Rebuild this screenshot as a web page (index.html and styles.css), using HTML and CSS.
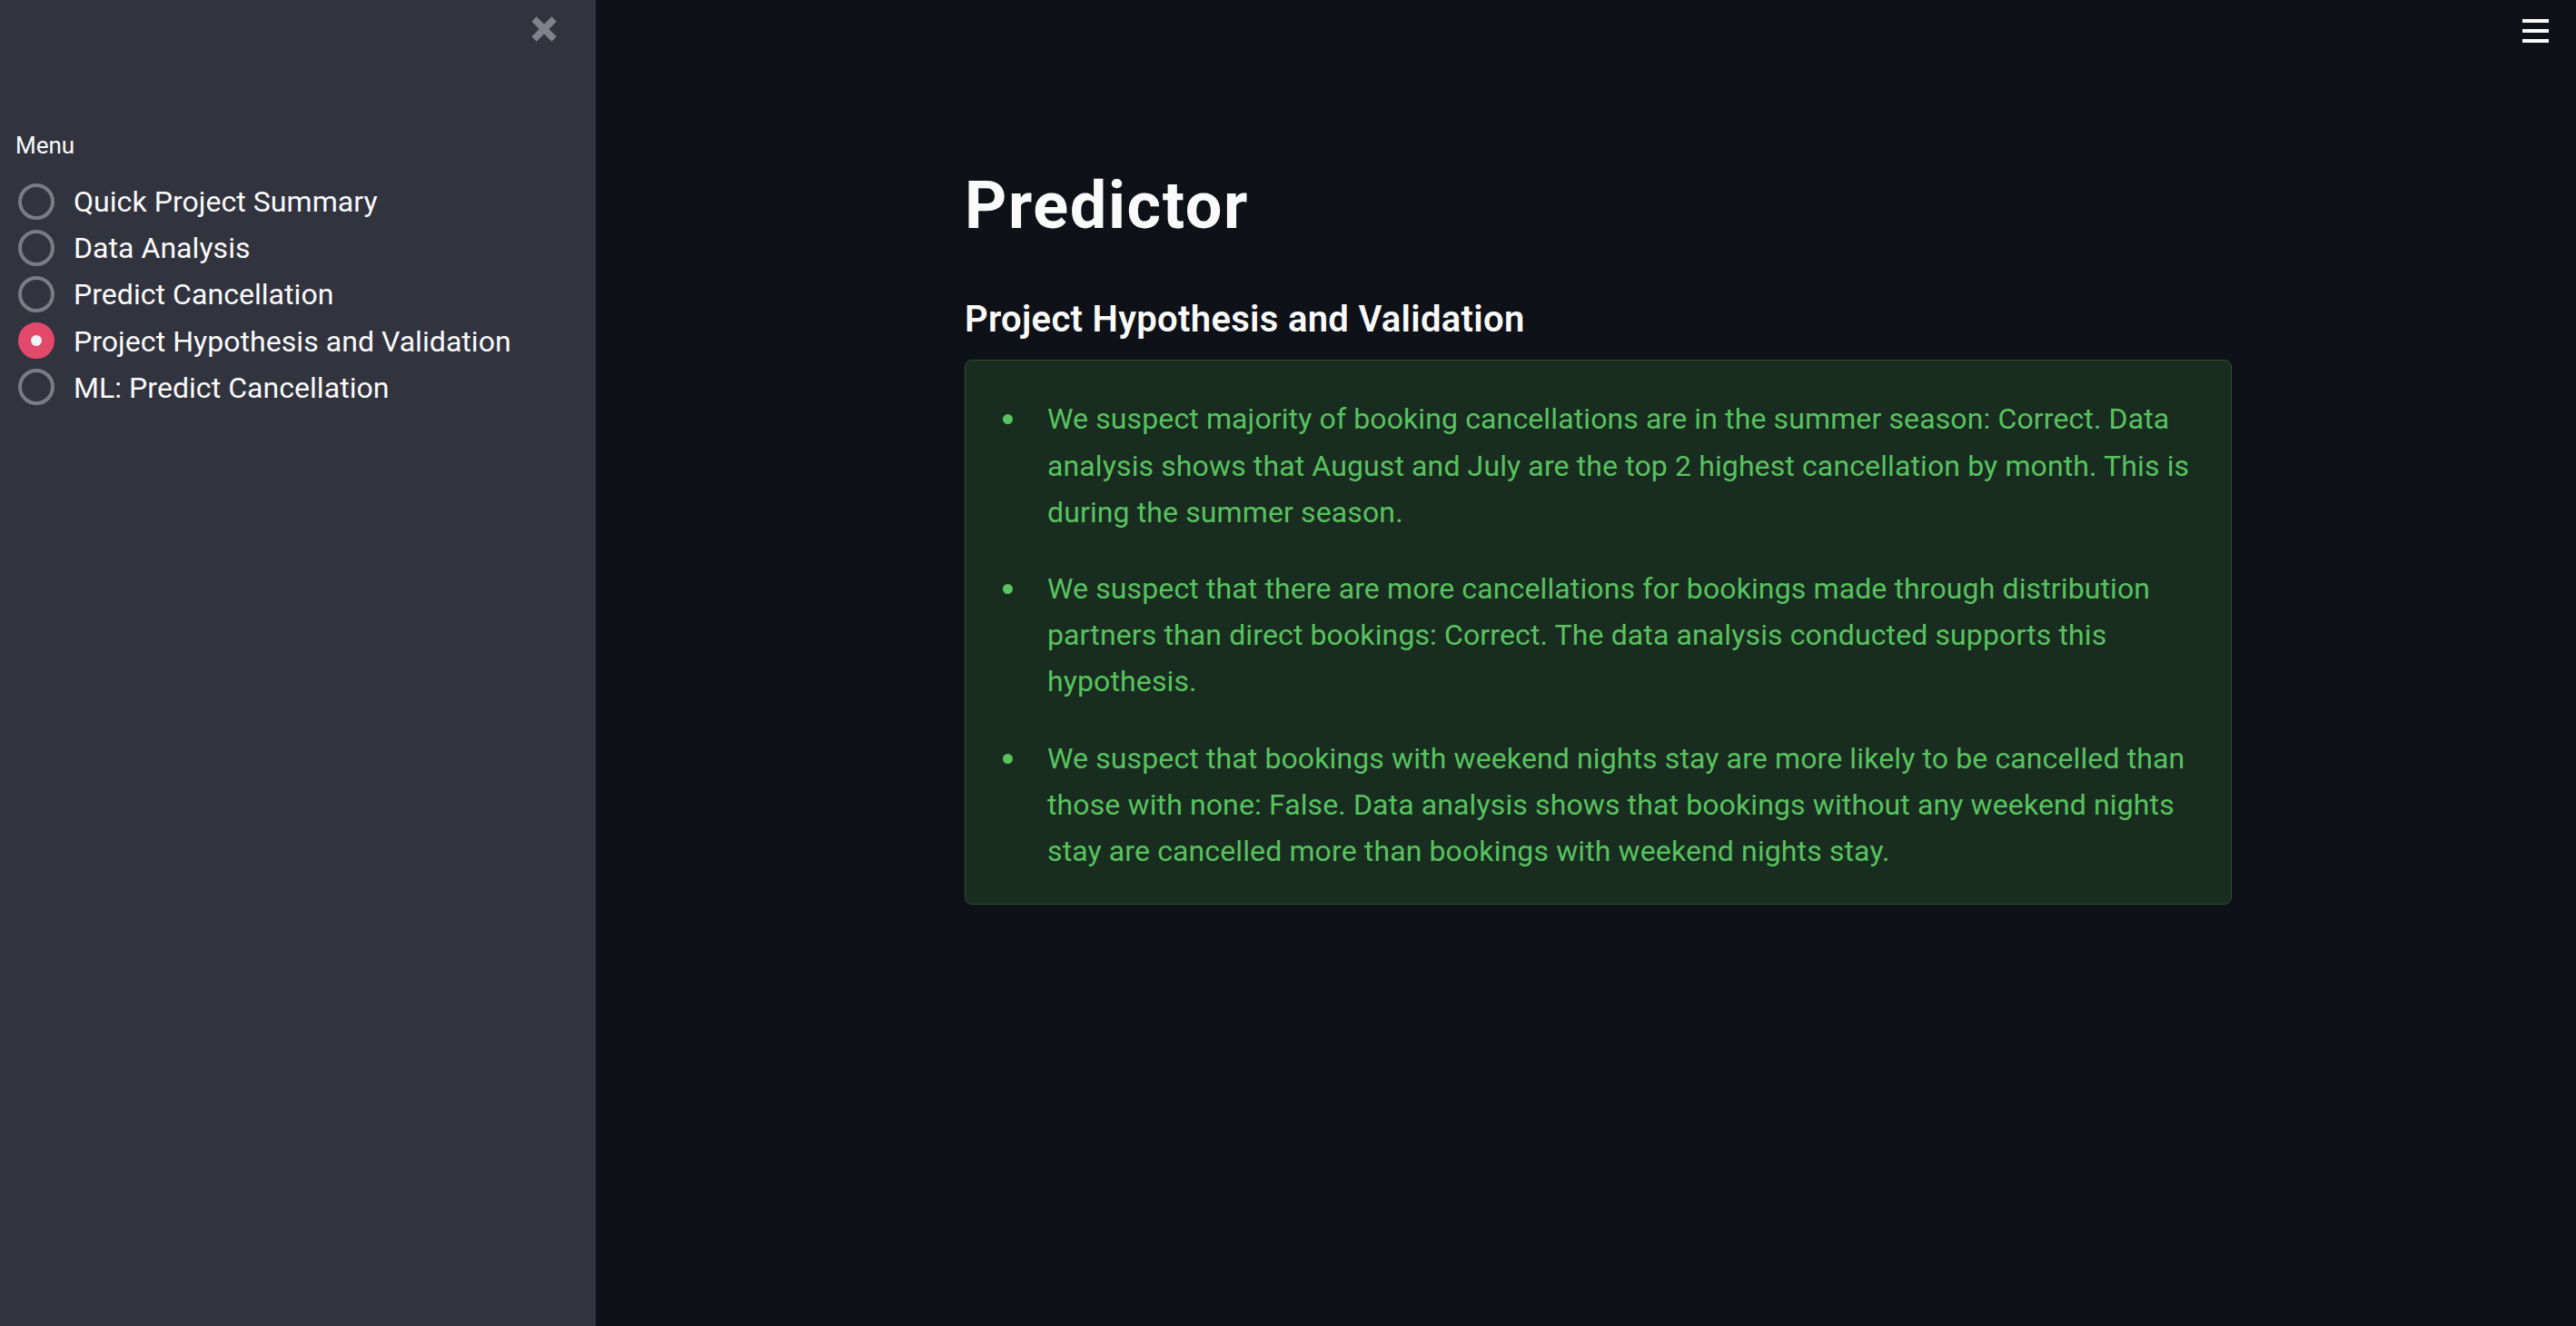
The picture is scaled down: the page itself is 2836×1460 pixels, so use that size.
FILE: index.html
```html
<!DOCTYPE html>
<html lang="en">
<head>
<meta charset="utf-8">
<title>Predictor</title>
<link rel="stylesheet" href="styles.css">
</head>
<body>
<div class="app">
  <aside class="sidebar">
    <div class="sidebar-head">
      <button class="close-btn" aria-label="Close sidebar">
        <svg width="28" height="28" viewBox="0 0 28 28"><path d="M3 3L25 25M25 3L3 25" stroke="#808289" stroke-width="7.5" fill="none"/></svg>
      </button>
    </div>
    <div class="menu-label">Menu</div>
    <div class="radio-group">
      <div class="radio"><span class="dot"></span><span class="radio-text">Quick Project Summary</span></div>
      <div class="radio"><span class="dot"></span><span class="radio-text">Data Analysis</span></div>
      <div class="radio"><span class="dot"></span><span class="radio-text">Predict Cancellation</span></div>
      <div class="radio checked"><span class="dot"></span><span class="radio-text">Project Hypothesis and Validation</span></div>
      <div class="radio"><span class="dot"></span><span class="radio-text">ML: Predict Cancellation</span></div>
    </div>
  </aside>
  <main class="main">
    <div class="toolbar">
      <button class="menu-btn" aria-label="Menu"><span></span><span></span><span></span></button>
    </div>
    <div class="block">
      <h1 class="title">Predictor</h1>
      <h3 class="subtitle">Project Hypothesis and Validation</h3>
      <div class="alert">
        <ul class="points">
          <li>We suspect majority of booking cancellations are in the summer season: Correct. Data analysis shows that August and July are the top 2 highest cancellation by month. This is during the summer season.</li>
          <li>We suspect that there are more cancellations for bookings made through distribution partners than direct bookings: Correct. The data analysis conducted supports this hypothesis.</li>
          <li>We suspect that bookings with weekend nights stay are more likely to be cancelled than those with none: False. Data analysis shows that bookings without any weekend nights stay are cancelled more than bookings with weekend nights stay.</li>
        </ul>
      </div>
    </div>
  </main>
</div>
</body>
</html>
```
FILE: styles.css
```css
* { box-sizing: border-box; }
html, body { margin: 0; padding: 0; height: 100%; }
body {
  background: #0e1117;
  color: #fafafa;
  font-family: Roboto, "Liberation Sans", sans-serif;
  overflow: hidden;
}
.app { display: flex; height: 100vh; }

.sidebar {
  width: 656px;
  flex: none;
  background: #31333f;
  padding: 18px 43px 0 16px;
}
.sidebar-head { display: flex; justify-content: flex-end; height: 28px; }
.close-btn {
  width: 28px; height: 28px; padding: 0; border: 0; background: none; display: block;
}
.close-btn svg { display: block; }
.menu-label {
  margin-top: 98px;
  font-size: 26px;
  line-height: 32px;
  padding-left: 1px;
  color: #fafafa;
}
.radio-group { margin-top: 20px; display: flex; flex-direction: column; }
.radio {
  display: flex; align-items: center;
  height: 51.2px;
  padding-left: 4px;
  gap: 21px;
}
.dot {
  width: 40px; height: 40px; border-radius: 50%;
  border: 4px solid #7a7b83;
  flex: none;
  display: flex; align-items: center; justify-content: center;
}
.radio.checked .dot { background: #e2496a; border-color: #e2496a; }
.radio.checked .dot::after {
  content: ""; width: 12px; height: 12px; border-radius: 50%; background: #f0f2f6;
}
.radio-text { font-size: 32px; line-height: 51.2px; color: #fafafa; padding-top: 2px; letter-spacing: 0.05px; }

.main { flex: 1; position: relative; }
.toolbar { position: absolute; top: 21px; right: 30px; }
.menu-btn {
  width: 29px; padding: 0; border: 0; background: none;
  display: flex; flex-direction: column; gap: 7px;
}
.menu-btn span { display: block; height: 4px; background: #fafafa; }

.block { width: 1395px; margin-left: 406px; padding-top: 184px; }
.title {
  margin: 0; font-size: 72px; line-height: 86.4px; font-weight: 700; color: #fafafa;
  letter-spacing: 1.6px;
}
.subtitle {
  margin: 58px 0 0; font-size: 40px; line-height: 48px; font-weight: 600; color: #fafafa;
  letter-spacing: 0.3px;
}
.alert {
  margin-top: 20px;
  background: #192c20;
  border: 1px solid #2a5232;
  border-radius: 8px;
  padding: 39px 33px 32px 32px;
  color: #58c25e;
}
.points { list-style: none; margin: 0; padding: 0; }
.points li {
  display: flex; align-items: flex-start;
  font-size: 32px; line-height: 51.2px;
  letter-spacing: 0.12px;
}
.points li + li { margin-top: 33px; }
.points li::before {
  content: ""; flex: none;
  width: 11px; height: 11px; border-radius: 50%; background: #58c25e;
  margin: 20px 38px 0 9px;
}
```
